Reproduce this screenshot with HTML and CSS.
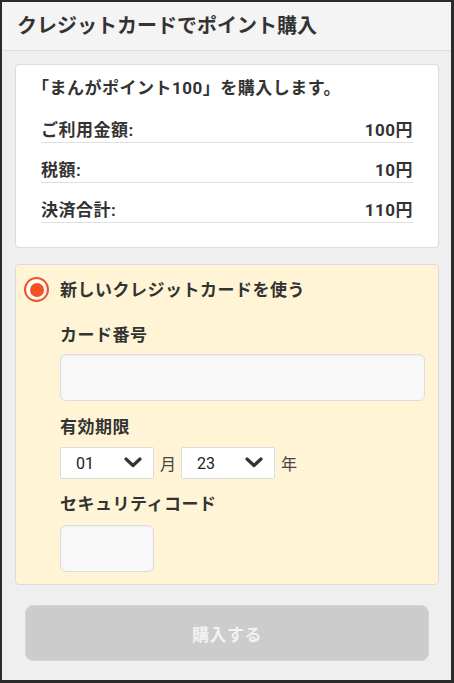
FILE: index.html
```html
<!DOCTYPE html>
<html lang="ja">
<head>
    <meta charset="utf-8">
    <title>クレジットカードでポイント購入</title>
    <link rel="stylesheet" href="styles.css">
</head>
<body>
    <div class="frame">
        <header class="page-header">
            <h1>クレジットカードでポイント購入</h1>
        </header>

        <div class="content">
            <section class="card summary">
                <p class="summary-title">「まんがポイント100」を購入します。</p>
                <div class="summary-row">
                    <span>ご利用金額:</span>
                    <span>100円</span>
                </div>
                <div class="summary-row">
                    <span>税額:</span>
                    <span>10円</span>
                </div>
                <div class="summary-row">
                    <span>決済合計:</span>
                    <span>110円</span>
                </div>
            </section>

            <section class="card payment">
                <label class="radio-row">
                    <span class="radio"><span class="radio-dot"></span></span>
                    <span>新しいクレジットカードを使う</span>
                </label>

                <div class="form">
                    <div class="field-label">カード番号</div>
                    <input class="text-input card-number" type="text">

                    <div class="field-label">有効期限</div>
                    <div class="expiry">
                        <div class="select-box">
                            <select>
                                <option>01</option>
                                <option>02</option>
                                <option>03</option>
                            </select>
                            <svg class="chevron" width="18" height="11" viewBox="0 0 18 11">
                                <path d="M2 2 L9 8.5 L16 2" fill="none" stroke="#333" stroke-width="3.2" stroke-linecap="round" stroke-linejoin="round"/>
                            </svg>
                        </div>
                        <span class="unit">月</span>
                        <div class="select-box">
                            <select>
                                <option>23</option>
                                <option>24</option>
                                <option>25</option>
                            </select>
                            <svg class="chevron" width="18" height="11" viewBox="0 0 18 11">
                                <path d="M2 2 L9 8.5 L16 2" fill="none" stroke="#333" stroke-width="3.2" stroke-linecap="round" stroke-linejoin="round"/>
                            </svg>
                        </div>
                        <span class="unit">年</span>
                    </div>

                    <div class="field-label">セキュリティコード</div>
                    <input class="text-input security-code" type="text">
                </div>
            </section>

            <div class="actions">
                <button class="buy-btn" disabled>購入する</button>
            </div>
        </div>
    </div>
</body>
</html>
```

FILE: styles.css
```css
* {
    box-sizing: border-box;
}

body {
    margin: 0;
    background-color: #2b2b2b;
    font-family: Roboto, "Noto Sans CJK JP", sans-serif;
    color: #333;
}

.frame {
    height: 683px;
    border-style: solid;
    border-color: #2b2b2b;
    border-width: 2px 3px 3px 2px;
    background-color: #efefef;
    overflow: hidden;
}

.page-header {
    height: 49px;
    padding-left: 15px;
    background-color: #f4f4f4;
    border-bottom: 1px solid #dedede;
    display: flex;
    align-items: center;
}

.page-header h1 {
    margin: 0;
    font-size: 20px;
    font-weight: bold;
    color: #333;
    line-height: 28px;
}

.content {
    padding: 13px 12px 0 13px;
}

.card {
    border: 1px solid #dcdcdc;
    border-radius: 4px;
}

.summary {
    background-color: #fff;
    padding: 11px 25px 24px 25px;
}

.summary-title {
    margin: 0 0 3px -9px;
    font-size: 17px;
    font-weight: bold;
    line-height: 24px;
    letter-spacing: 0.5px;
}

.summary-row {
    display: flex;
    justify-content: space-between;
    padding-top: 15px;
    font-size: 17px;
    font-weight: bold;
    line-height: 24px;
    letter-spacing: 0.5px;
    border-bottom: 1px solid #e0e0e0;
}

.payment {
    margin-top: 16px;
    background-color: #fff5d6;
    padding: 12px 13px 12px 8px;
}

.radio-row {
    display: flex;
    align-items: center;
    gap: 11px;
    font-size: 17px;
    font-weight: bold;
    line-height: 24px;
    letter-spacing: 0.5px;
}

.radio {
    width: 25px;
    height: 25px;
    border: 2px solid #f4511e;
    border-radius: 50%;
    background-color: #fff;
    display: flex;
    align-items: center;
    justify-content: center;
}

.radio-dot {
    width: 14px;
    height: 14px;
    border-radius: 50%;
    background-color: #f4511e;
}

.form {
    padding-left: 36px;
}

.field-label {
    font-size: 17px;
    font-weight: bold;
    line-height: 24px;
    letter-spacing: 0.5px;
    margin-top: 21px;
    margin-bottom: 7px;
}

.expiry + .field-label {
    margin-top: 13px;
    margin-bottom: 9px;
}

.text-input + .field-label {
    margin-top: 14px;
    margin-bottom: 8px;
}

.text-input {
    display: block;
    height: 47px;
    border: 1px solid #dcdcdc;
    border-radius: 6px;
    background-color: #f8f8f8;
    box-shadow: inset 0 1px 2px rgba(0, 0, 0, 0.04);
}

.card-number {
    width: 365px;
}

.security-code {
    width: 94px;
}

.expiry {
    display: flex;
    align-items: center;
}

.select-box {
    position: relative;
    width: 94px;
    height: 32px;
}

.select-box select {
    appearance: none;
    -webkit-appearance: none;
    width: 100%;
    height: 100%;
    padding-left: 15px;
    border: 1px solid #dcdcdc;
    border-radius: 2px;
    background-color: #fff;
    font-family: Roboto, "Noto Sans CJK JP", sans-serif;
    font-size: 16px;
    color: #222;
}

.chevron {
    position: absolute;
    right: 12px;
    top: 10px;
    pointer-events: none;
}

.unit {
    margin: 0 5px 0 6px;
    font-size: 16px;
    color: #444;
}

.actions {
    padding: 20px 10px 0 10px;
}

.buy-btn {
    width: 100%;
    height: 56px;
    border: 1px solid #d4d4d4;
    border-radius: 8px;
    background-color: #cccccc;
    color: #f2f2f2;
    font-family: Roboto, "Noto Sans CJK JP", sans-serif;
    font-size: 17px;
    font-weight: bold;
    letter-spacing: 0.5px;
}
```
